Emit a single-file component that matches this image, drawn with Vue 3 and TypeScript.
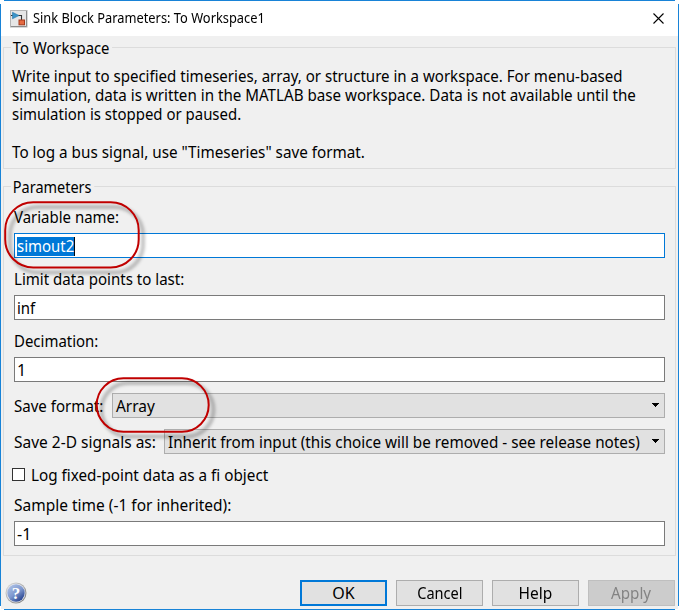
<script setup lang="ts">
import { ref } from 'vue'

const description: { text: string; cls: string }[] = [
  { text: 'Write input to specified timeseries, array, or structure in a workspace. For menu-based', cls: 'w94' },
  { text: 'simulation, data is written in the MATLAB base workspace. Data is not available until the', cls: 'w947' },
  { text: 'simulation is stopped or paused.', cls: 'w935' },
  { text: '', cls: 'blank' },
  { text: 'To log a bus signal, use "Timeseries" save format.', cls: 'w953' },
]
const variableName = ref('simout2')
const limit = ref('inf')
const decimation = ref('1')
const sampleTime = ref('-1')
</script>

<template>
  <div class="dialog">
    <svg class="frame" width="679" height="610" viewBox="0 0 679 610" aria-hidden="true">
      <path d="M0 0h4v1h-3v3h-1zM675 0h4v4h-1v-3h-3zM0 606h1v3h3v1h-4zM679 606v4h-4v-1h3v-3z" fill="#fff" />
      <path d="M4 .5H675M678.500 4V606M675 609.500H4M.5 606V4" stroke="#1883d7" fill="none" />
    </svg>
    <header class="titlebar">
      <svg class="app-icon" width="18" height="18" viewBox="0 0 18 18">
        <rect x=".5" y=".5" width="16.500" height="16.500" fill="#e6e6e6" stroke="#b4b4b4" />
        <path d="M1 16.500h15.500V1" fill="none" stroke="#8c8c8c" />
        <path d="M1 5.500h2M8 5.500h3.500v4.500" fill="none" stroke="#333" stroke-width="1.100" />
        <path d="M2.500 2.300L9 5.500L2.500 8.800z" fill="#3c94c8" stroke="#2779ab" stroke-width=".6" />
        <rect x="9" y="10" width="5.500" height="4.800" fill="#e56a42" stroke="#a63b1c" />
      </svg>
      <span class="title">Sink Block Parameters: To Workspace1</span>
      <svg class="close" width="11" height="11" viewBox="0 0 11 11"><path d="M.5.5l10 10M10.500.5l-10 10" stroke="#000" stroke-width="1.100" /></svg>
    </header>

    <section class="group about">
      <h2 class="legend"><span class="t w927">To Workspace</span></h2>
      <p v-for="line in description" :key="line.cls" class="line"><span :class="['t', line.cls]">{{ line.text }}</span></p>
    </section>

    <section class="group params">
      <h2 class="legend"><span class="t w905">Parameters</span></h2>
      <div class="label"><span class="t w935">Variable name:</span></div>
      <div class="field focused"><span class="t w935 selected">{{ variableName }}</span></div>
      <div class="label"><span class="t w94">Limit data points to last:</span></div>
      <div class="field"><span class="t w935">{{ limit }}</span></div>
      <div class="label"><span class="t w935">Decimation:</span></div>
      <div class="field"><span class="t">{{ decimation }}</span></div>
      <div class="row">
        <span class="row-label"><span class="t w94">Save format:</span></span>
        <div class="select"><span class="t w965">Array</span><svg width="7" height="4" viewBox="0 0 7 4"><path d="M0 0h7v1h-1v1h-1v1h-1v1h-1v-1h-1v-1h-1v-1h-1z" /></svg></div>
      </div>
      <div class="row">
        <span class="row-label sig"><span class="t w968">Save 2-D signals as:</span></span>
        <div class="select"><span class="t w953">Inherit from input (this choice will be removed - see release notes)</span><svg width="7" height="4" viewBox="0 0 7 4"><path d="M0 0h7v1h-1v1h-1v1h-1v1h-1v-1h-1v-1h-1v-1h-1z" /></svg></div>
      </div>
      <div class="check"><i class="box"></i><span class="t w953">Log fixed-point data as a fi object</span></div>
      <div class="label"><span class="t w968">Sample time (-1 for inherited):</span></div>
      <div class="field"><span class="t">{{ sampleTime }}</span></div>
    </section>

    <footer class="footer">
      <svg class="help-icon" width="22" height="22" viewBox="0 0 22 22">
        <defs>
          <linearGradient id="orb" x1=".15" y1=".1" x2=".8" y2=".95">
            <stop offset="0" stop-color="#a9bde3" /><stop offset=".5" stop-color="#7e98cf" /><stop offset="1" stop-color="#233f8c" />
          </linearGradient>
          <linearGradient id="rim" x1="0" y1="0" x2="1" y2="1">
            <stop offset="0" stop-color="#e0e0e0" /><stop offset="1" stop-color="#777" />
          </linearGradient>
        </defs>
        <circle cx="11" cy="11" r="10.500" fill="url(#rim)" />
        <circle cx="11" cy="11" r="9.400" fill="#e4e7ef" />
        <circle cx="11" cy="11" r="8.700" fill="url(#orb)" />
        <text x="11" y="16.800" text-anchor="middle" class="mark">?</text>
      </svg>
      <button class="btn default"><span>OK</span></button>
      <button class="btn"><span class="w91">Cancel</span></button>
      <button class="btn"><span class="w968">Help</span></button>
      <button class="btn" disabled><span class="w947">Apply</span></button>
    </footer>

    <svg class="marks" width="679" height="610" viewBox="0 0 679 610" aria-hidden="true">
      <defs>
        <filter id="soft" x="-20%" y="-20%" width="150%" height="150%"><feGaussianBlur stdDeviation="1.500" /></filter>
      </defs>
      <g fill="none" stroke="#000" stroke-opacity=".23" stroke-width="4" filter="url(#soft)">
        <rect x="10" y="207" width="133" height="65.500" rx="28" />
        <rect x="101.500" y="383" width="112" height="53.500" rx="26.700" />
      </g>
      <g fill="none" stroke="#c00000" stroke-width="2">
        <rect x="5.200" y="202.200" width="133.500" height="65.300" rx="28" />
        <rect x="96.700" y="378.300" width="112" height="53.500" rx="26.700" />
      </g>
    </svg>
  </div>
</template>

<style>
body { margin: 0; }
</style>

<style scoped>
.dialog {
  position: relative;
  box-sizing: border-box;
  width: 679px;
  height: 610px;
  padding: 1px;
  overflow: hidden;
  background: #f0f0f0;
  color: #000;
  font: 16px/19px "Noto Sans", sans-serif;
  white-space: nowrap;
}
.frame, .marks { position: absolute; left: 0; top: 0; pointer-events: none; }
.t {
  display: inline-block;
  vertical-align: top;
  transform: translateY(1px) scaleX(var(--s, 1));
  transform-origin: 0 0;
}
.w905 { --s: .905; }
.w91 { --s: .91; }
.w927 { --s: .927; }
.w935 { --s: .935; }
.w94 { --s: .9415; }
.w947 { --s: .947; }
.w953 { --s: .953; }
.w965 { --s: .965; }
.w968 { --s: .968; }
.titlebar {
  display: flex;
  align-items: center;
  height: 35px;
  padding: 0 14px 0 9px;
  background: #fff;
}
.title {
  flex: 1;
  margin-left: 5px;
  font-size: 13.5px;
  transform: scaleX(.951);
  transform-origin: 0 0;
}
.group {
  box-sizing: border-box;
  width: 673px;
  margin-left: 2px;
  border: 1px solid #dcdcdc;
}
.about { height: 122px; margin-top: 11px; padding: 0 8px; }
.params { height: 370px; margin-top: 17px; padding: 0 10px; }
.legend {
  height: 19px;
  margin: -10px 0 9px -1px;
  font: inherit;
}
.legend .t { background: #f0f0f0; padding: 0 3px 0 2px; }
.params .legend { margin-left: -3px; margin-bottom: 11px; }
.line { margin: 0; height: 19px; }
.label { height: 19px; margin-bottom: 7px; }
.field {
  box-sizing: border-box;
  width: 651px;
  height: 25px;
  margin-bottom: 11px;
  padding: 2px;
  border: 1px solid #7a7a7a;
  background: #fff;
}
.focused { border-color: #0078d7; }
.selected { background: #0078d7; color: #fff; border-right: 1px solid #000; }
.row { display: flex; height: 25px; width: 651px; margin-bottom: 11px; }
.row-label { padding-top: 3px; width: 98px; flex: none; }
.sig { width: 150px; }
.select {
  box-sizing: border-box;
  flex: 1;
  min-width: 0;
  display: flex;
  align-items: center;
  justify-content: space-between;
  padding: 0 5px 0 3px;
  border: 1px solid #adadad;
  background: #e1e1e1;
}
.select .t { flex: 1; min-width: 0; }
.select svg { flex: none; margin-top: -2px; }
.check { display: flex; align-items: center; height: 19px; margin: 0 0 11px -2px; gap: 6px; }
.box { box-sizing: border-box; width: 13px; height: 13px; border: 1px solid #333; background: #fff; }
.footer { display: flex; align-items: flex-start; gap: 9px; margin-top: 24px; padding-left: 4px; }
.help-icon { margin: 2px 264px 0 0; }
.mark { font: bold 17px "Liberation Serif", serif; fill: #fff; }
.btn {
  box-sizing: border-box;
  width: 87px;
  height: 26px;
  padding: 0;
  border: 1px solid #adadad;
  background: #e1e1e1;
  color: #000;
  font: inherit;
}
.btn span { display: inline-block; transform: scaleX(var(--s, 1)); }
.default { border: 2px solid #0078d7; }
.btn:disabled { background: #ccc; border-color: #bfbfbf; color: #838383; }
</style>
